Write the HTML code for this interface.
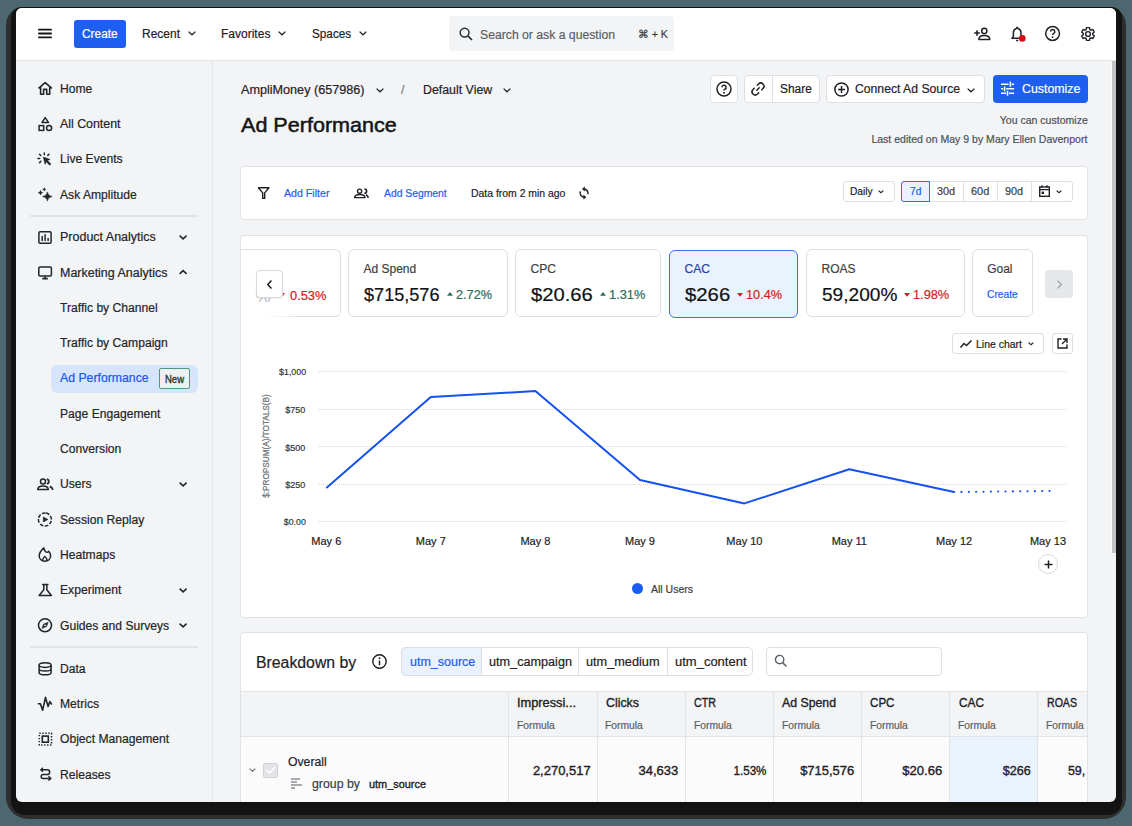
<!DOCTYPE html>
<html><head><meta charset="utf-8"><style>*{box-sizing:border-box;margin:0;padding:0}
html,body{width:1132px;height:826px;overflow:hidden}
body{background:#4c6770;font-family:"Liberation Sans",sans-serif;color:#1f2125;position:relative}
.abs{position:absolute}
.t{position:absolute;white-space:nowrap;line-height:1;-webkit-text-stroke:0.2px currentColor}
svg{position:absolute;overflow:visible}
#sh1{position:absolute;left:6px;top:6.5px;width:1120px;height:812px;background:#2e2e2e;border-radius:18px 18px 22px 22px}
#sh2{position:absolute;left:10.5px;top:7px;width:1111px;height:807.5px;background:#131313;border-radius:10px 10px 14px 14px}
#win{position:absolute;left:16px;top:8px;width:1100px;height:794px;background:#f3f4f6;border-radius:6px;overflow:hidden}
#c{position:absolute;left:-16px;top:-8px;width:1132px;height:826px}
</style></head><body>
<div id="sh1"></div><div id="sh2"></div>
<div id="win"><div id="c">
<div class="abs" style="left:16px;top:8px;width:1100px;height:52px;background:#fff"></div>
<div class="abs" style="left:16px;top:60px;width:1100px;height:1px;background:#e3e5e9"></div>
<div class="abs" style="left:212px;top:61px;width:1px;height:741px;background:#e3e5e9"></div>
<svg style="left:38px;top:28px" width="14" height="11" viewBox="0 0 14 11"><path d="M0.9 1.7H13.1M0.9 5.5H13.1M0.9 9.3H13.1" stroke="#141518" stroke-width="1.8" stroke-linecap="round"/></svg>
<div class="abs" style="left:74px;top:20px;width:52px;height:28px;background:#1e5ff2;border-radius:3px"></div>
<div class="t" id="t0" style="left:82.30px;top:27.82px;font-size:12.5px;color:#fff;font-weight:400;transform:scaleX(0.9512);transform-origin:0 0;">Create</div>
<div class="t" id="t1" style="left:141.90px;top:28.02px;font-size:12.5px;color:#1f2125;font-weight:400;transform:scaleX(0.9594);transform-origin:0 0;">Recent</div>
<svg style="left:187.5px;top:31px" width="8" height="4.4" viewBox="0 0 8 4.4"><path d="M0.6 0.6L4.0 3.8000000000000003L7.4 0.6" stroke="#1f2125" stroke-width="1.3" fill="none"/></svg>
<div class="t" id="t2" style="left:221.40px;top:28.02px;font-size:12.5px;color:#1f2125;font-weight:400;transform:scaleX(0.9610);transform-origin:0 0;">Favorites</div>
<svg style="left:278px;top:31px" width="8" height="4.4" viewBox="0 0 8 4.4"><path d="M0.6 0.6L4.0 3.8000000000000003L7.4 0.6" stroke="#1f2125" stroke-width="1.3" fill="none"/></svg>
<div class="t" id="t3" style="left:312.00px;top:28.02px;font-size:12.5px;color:#1f2125;font-weight:400;transform:scaleX(0.9400);transform-origin:0 0;">Spaces</div>
<svg style="left:358.6px;top:31px" width="8" height="4.4" viewBox="0 0 8 4.4"><path d="M0.6 0.6L4.0 3.8000000000000003L7.4 0.6" stroke="#1f2125" stroke-width="1.3" fill="none"/></svg>
<div class="abs" style="left:449px;top:16px;width:225px;height:35px;background:#f3f4f6;border-radius:4px"></div>
<svg style="left:459px;top:27px" width="14" height="14" viewBox="0 0 14 14"><circle cx="5.6" cy="5.6" r="4.4" stroke="#2a2c30" stroke-width="1.5" fill="none"/><path d="M8.8 8.8L13 13" stroke="#2a2c30" stroke-width="1.7"/></svg>
<div class="t" id="t4" style="left:480.00px;top:28.52px;font-size:12.5px;color:#5b5f66;font-weight:400;transform:scaleX(0.9763);transform-origin:0 0;">Search or ask a question</div>
<div class="t" id="t5" style="left:638.00px;top:28.79px;font-size:11px;color:#3a3d42;font-weight:400;transform:scaleX(0.9717);transform-origin:0 0;">⌘ + K</div>
<svg style="left:1080px;top:25.5px" width="16" height="16" viewBox="0 0 24 24"><path d="M19.14 12.94c.04-.3.06-.61.06-.94 0-.32-.02-.64-.07-.94l2.03-1.58a.49.49 0 0 0 .12-.61l-1.92-3.32a.488.488 0 0 0-.59-.22l-2.39.96c-.5-.38-1.030-.7-1.62-.94l-.36-2.54a.484.484 0 0 0-.48-.41h-3.84c-.24 0-.43.17-.47.41l-.36 2.54c-.59.24-1.13.57-1.62.94l-2.39-.96c-.22-.08-.47 0-.59.22L2.74 8.87c-.12.21-.08.47.12.61l2.03 1.58c-.05.3-.09.63-.09.94s.02.64.07.94l-2.030 1.58a.49.49 0 0 0-.12.61l1.92 3.32c.12.22.37.29.59.22l2.39-.96c.5.38 1.03.7 1.62.94l.36 2.54c.05.24.24.41.48.41h3.84c.24 0 .44-.17.47-.41l.36-2.54c.59-.24 1.13-.56 1.62-.94l2.39.96c.22.08.47 0 .59-.22l1.92-3.32c.12-.22.07-.47-.12-.61l-2.01-1.58zM12 15.6c-1.98 0-3.6-1.62-3.6-3.6s1.62-3.6 3.6-3.6 3.6 1.62 3.6 3.6-1.62 3.6-3.6 3.6z" fill="none" stroke="#1f2125" stroke-width="2.1"/></svg>
<div class="abs" style="left:30px;top:215px;width:168px;height:2px;background:#e1e3e7"></div>
<div class="abs" style="left:30px;top:646px;width:168px;height:2px;background:#e1e3e7"></div>
<div class="abs" style="left:51px;top:365px;width:147px;height:28px;background:#d6e4fc;border-radius:6px"></div>
<div class="t" id="t6" style="left:59.50px;top:82.72px;font-size:12.5px;color:#222428;font-weight:400;transform:scaleX(0.9687);transform-origin:0 0;">Home</div>
<div class="t" id="t7" style="left:59.50px;top:118.02px;font-size:12.5px;color:#222428;font-weight:400;transform:scaleX(0.9893);transform-origin:0 0;">All Content</div>
<div class="t" id="t8" style="left:59.50px;top:153.32px;font-size:12.5px;color:#222428;font-weight:400;transform:scaleX(0.9700);transform-origin:0 0;">Live Events</div>
<div class="t" id="t9" style="left:59.50px;top:188.62px;font-size:12.5px;color:#222428;font-weight:400;transform:scaleX(0.9700);transform-origin:0 0;">Ask Amplitude</div>
<div class="t" id="t10" style="left:59.50px;top:231.22px;font-size:12.5px;color:#222428;font-weight:400;transform:scaleX(0.9991);transform-origin:0 0;">Product Analytics</div>
<svg style="left:179px;top:234.6px" width="8.2" height="4.51" viewBox="0 0 8.2 4.51"><path d="M0.6 0.6L4.1 3.9099999999999997L7.6 0.6" stroke="#222428" stroke-width="1.5" fill="none"/></svg>
<div class="t" id="t11" style="left:59.50px;top:266.52px;font-size:12.5px;color:#222428;font-weight:400;transform:scaleX(0.9973);transform-origin:0 0;">Marketing Analytics</div>
<svg style="left:179px;top:269.9px" width="8.2" height="4.51" viewBox="0 0 8.2 4.51"><path d="M0.6 3.9099999999999997L4.1 0.6L7.6 3.9099999999999997" stroke="#222428" stroke-width="1.5" fill="none"/></svg>
<div class="t" id="t12" style="left:59.50px;top:301.82px;font-size:12.5px;color:#222428;font-weight:400;transform:scaleX(0.9700);transform-origin:0 0;">Traffic by Channel</div>
<div class="t" id="t13" style="left:59.50px;top:337.12px;font-size:12.5px;color:#222428;font-weight:400;transform:scaleX(0.9700);transform-origin:0 0;">Traffic by Campaign</div>
<div class="t" id="t14" style="left:59.50px;top:372.42px;font-size:12.5px;color:#1a55ec;font-weight:400;transform:scaleX(0.9809);transform-origin:0 0;">Ad Performance</div>
<div class="t" id="t15" style="left:59.50px;top:407.72px;font-size:12.5px;color:#222428;font-weight:400;transform:scaleX(0.9700);transform-origin:0 0;">Page Engagement</div>
<div class="t" id="t16" style="left:59.50px;top:443.02px;font-size:12.5px;color:#222428;font-weight:400;transform:scaleX(0.9700);transform-origin:0 0;">Conversion</div>
<div class="t" id="t17" style="left:59.50px;top:478.32px;font-size:12.5px;color:#222428;font-weight:400;transform:scaleX(0.9700);transform-origin:0 0;">Users</div>
<svg style="left:179px;top:481.7px" width="8.2" height="4.51" viewBox="0 0 8.2 4.51"><path d="M0.6 0.6L4.1 3.9099999999999997L7.6 0.6" stroke="#222428" stroke-width="1.5" fill="none"/></svg>
<div class="t" id="t18" style="left:59.50px;top:513.62px;font-size:12.5px;color:#222428;font-weight:400;transform:scaleX(0.9700);transform-origin:0 0;">Session Replay</div>
<div class="t" id="t19" style="left:59.50px;top:548.92px;font-size:12.5px;color:#222428;font-weight:400;transform:scaleX(0.9700);transform-origin:0 0;">Heatmaps</div>
<div class="t" id="t20" style="left:59.50px;top:584.22px;font-size:12.5px;color:#222428;font-weight:400;transform:scaleX(0.9700);transform-origin:0 0;">Experiment</div>
<svg style="left:179px;top:587.6px" width="8.2" height="4.51" viewBox="0 0 8.2 4.51"><path d="M0.6 0.6L4.1 3.9099999999999997L7.6 0.6" stroke="#222428" stroke-width="1.5" fill="none"/></svg>
<div class="t" id="t21" style="left:59.50px;top:619.52px;font-size:12.5px;color:#222428;font-weight:400;transform:scaleX(0.9700);transform-origin:0 0;">Guides and Surveys</div>
<svg style="left:179px;top:622.9px" width="8.2" height="4.51" viewBox="0 0 8.2 4.51"><path d="M0.6 0.6L4.1 3.9099999999999997L7.6 0.6" stroke="#222428" stroke-width="1.5" fill="none"/></svg>
<div class="t" id="t22" style="left:59.50px;top:662.62px;font-size:12.5px;color:#222428;font-weight:400;transform:scaleX(0.9700);transform-origin:0 0;">Data</div>
<div class="t" id="t23" style="left:59.50px;top:697.92px;font-size:12.5px;color:#222428;font-weight:400;transform:scaleX(0.9700);transform-origin:0 0;">Metrics</div>
<div class="t" id="t24" style="left:59.50px;top:733.22px;font-size:12.5px;color:#222428;font-weight:400;transform:scaleX(0.9700);transform-origin:0 0;">Object Management</div>
<div class="t" id="t25" style="left:59.50px;top:768.52px;font-size:12.5px;color:#222428;font-weight:400;transform:scaleX(0.9700);transform-origin:0 0;">Releases</div>
<div class="abs" style="left:159px;top:368px;width:31px;height:21px;background:#eef0f1;border:1px solid #4b9a83;border-radius:2px"></div>
<div class="t" id="t26" style="left:165.00px;top:373.79px;font-size:11px;color:#24352f;font-weight:400;-webkit-text-stroke:0.35px #24352f;transform:scaleX(0.8630);transform-origin:0 0;">New</div>
<div class="t" id="t27" style="left:241.00px;top:84.42px;font-size:12.5px;color:#1f2125;font-weight:400;transform:scaleX(1.0098);transform-origin:0 0;">AmpliMoney (657986)</div>
<svg style="left:376px;top:88.3px" width="8" height="4.4" viewBox="0 0 8 4.4"><path d="M0.6 0.6L4.0 3.8000000000000003L7.4 0.6" stroke="#1f2125" stroke-width="1.3" fill="none"/></svg>
<div class="t" id="t28" style="left:401.00px;top:84.42px;font-size:12.5px;color:#7a7d82;font-weight:400;">/</div>
<div class="t" id="t29" style="left:422.70px;top:84.42px;font-size:12.5px;color:#1f2125;font-weight:400;transform:scaleX(0.9892);transform-origin:0 0;">Default View</div>
<svg style="left:503.3px;top:88.3px" width="8" height="4.4" viewBox="0 0 8 4.4"><path d="M0.6 0.6L4.0 3.8000000000000003L7.4 0.6" stroke="#1f2125" stroke-width="1.3" fill="none"/></svg>
<div class="t" id="t30" style="left:240.60px;top:114.78px;font-size:20.7px;color:#131417;font-weight:400;transform:scaleX(1.0422);transform-origin:0 0;-webkit-text-stroke:0.5px #131417;">Ad Performance</div>
<div class="abs" style="left:710px;top:75px;width:28px;height:28px;background:#fff;border:1px solid #dcdfe3;border-radius:4px;"></div>
<svg style="left:716px;top:81px" width="16" height="16" viewBox="0 0 16 16"><circle cx="8" cy="8" r="7" stroke="#1f2125" stroke-width="1.5" fill="none"/><path d="M5.9 6.3A2.1 2.1 0 1 1 8.9 8.2C8.3 8.5 8 8.9 8 9.6" stroke="#1f2125" stroke-width="1.5" fill="none"/><circle cx="8" cy="11.7" r="0.95" fill="#1f2125"/></svg>
<div class="abs" style="left:744px;top:75px;width:76px;height:28px;background:#fff;border:1px solid #dcdfe3;border-radius:4px;"></div>
<div class="abs" style="left:772px;top:75px;width:1px;height:28px;background:#dcdfe3"></div>
<svg style="left:751px;top:82px" width="14" height="14" viewBox="0 0 14 14"><path d="M5.8 8.2L8.2 5.8M6.3 3.2L7.5 2A2.8 2.8 0 0 1 12 6.5L10.8 7.7M7.7 10.8L6.5 12A2.8 2.8 0 0 1 2 7.5L3.2 6.3" stroke="#1f2125" stroke-width="1.5" fill="none" stroke-linecap="round"/></svg>
<div class="t" id="t31" style="left:779.50px;top:83.32px;font-size:12.5px;color:#1f2125;font-weight:400;transform:scaleX(0.9533);transform-origin:0 0;">Share</div>
<div class="abs" style="left:826px;top:75px;width:159px;height:28px;background:#fff;border:1px solid #dcdfe3;border-radius:4px;"></div>
<svg style="left:834px;top:82px" width="15" height="15" viewBox="0 0 15 15"><circle cx="7.5" cy="7.5" r="6.6" stroke="#1f2125" stroke-width="1.5" fill="none"/><path d="M7.5 4V11M4 7.5H11" stroke="#1f2125" stroke-width="1.5"/></svg>
<div class="t" id="t32" style="left:854.80px;top:83.32px;font-size:12.5px;color:#1f2125;font-weight:400;transform:scaleX(0.9748);transform-origin:0 0;">Connect Ad Source</div>
<svg style="left:967px;top:87.5px" width="8" height="4.4" viewBox="0 0 8 4.4"><path d="M0.6 0.6L4.0 3.8000000000000003L7.4 0.6" stroke="#1f2125" stroke-width="1.3" fill="none"/></svg>
<div class="abs" style="left:993px;top:75px;width:95px;height:28px;background:#1e5ff2;border-radius:4px"></div>
<div class="t" id="t33" style="left:1021.60px;top:83.32px;font-size:12.5px;color:#fff;font-weight:400;transform:scaleX(0.9874);transform-origin:0 0;">Customize</div>
<div class="t" id="t34" style="right:44.40px;top:115.01px;font-size:10.5px;color:#4d5157;font-weight:400;transform:scaleX(1.0028);transform-origin:100% 0;">You can customize</div>
<div class="t" id="t35" style="right:44.40px;top:134.41px;font-size:10.5px;color:#4d5157;font-weight:400;transform:scaleX(1.0029);transform-origin:100% 0;">Last edited on May 9 by Mary Ellen Davenport</div>
<div class="abs" style="left:240px;top:166px;width:848px;height:54px;background:#fff;border:1px solid #e0e2e6;border-radius:4px;"></div>
<div class="t" id="t36" style="left:284.30px;top:187.99px;font-size:11px;color:#1d5cf0;font-weight:400;transform:scaleX(0.9665);transform-origin:0 0;">Add Filter</div>
<div class="t" id="t37" style="left:383.60px;top:187.99px;font-size:11px;color:#1d5cf0;font-weight:400;transform:scaleX(0.9406);transform-origin:0 0;">Add Segment</div>
<div class="t" id="t38" style="left:471.20px;top:187.99px;font-size:11px;color:#1f2125;font-weight:400;transform:scaleX(0.9473);transform-origin:0 0;">Data from 2 min ago</div>
<div class="abs" style="left:843px;top:181px;width:52px;height:21px;background:#fff;border:1px solid #dcdfe3;border-radius:3px;"></div>
<div class="t" id="t39" style="left:850.30px;top:186.37px;font-size:11.5px;color:#1f2125;font-weight:400;transform:scaleX(0.8880);transform-origin:0 0;">Daily</div>
<svg style="left:878.3px;top:189.5px" width="6" height="3.3000000000000003" viewBox="0 0 6 3.3000000000000003"><path d="M0.6 0.6L3.0 2.7L5.4 0.6" stroke="#1f2125" stroke-width="1.2" fill="none"/></svg>
<div class="abs" style="left:901px;top:181px;width:172px;height:21px;background:#fff;border:1px solid #dcdfe3;border-radius:3px;"></div>
<div class="abs" style="left:963px;top:181px;width:1px;height:21px;background:#dcdfe3"></div>
<div class="abs" style="left:997px;top:181px;width:1px;height:21px;background:#dcdfe3"></div>
<div class="abs" style="left:1031px;top:181px;width:1px;height:21px;background:#dcdfe3"></div>
<div class="abs" style="left:901px;top:181px;width:29px;height:21px;background:#eaf2fe;border:1px solid #2e6cf0;border-radius:3px 0 0 3px"></div>
<div class="t" id="t40" style="left:909.70px;top:186.37px;font-size:11.5px;color:#1d5cf0;font-weight:400;transform:scaleX(0.8908);transform-origin:0 0;">7d</div>
<div class="t" id="t41" style="left:937.20px;top:186.37px;font-size:11.5px;color:#3a3d42;font-weight:400;transform:scaleX(0.9381);transform-origin:0 0;">30d</div>
<div class="t" id="t42" style="left:970.90px;top:186.37px;font-size:11.5px;color:#3a3d42;font-weight:400;transform:scaleX(0.9537);transform-origin:0 0;">60d</div>
<div class="t" id="t43" style="left:1004.80px;top:186.37px;font-size:11.5px;color:#3a3d42;font-weight:400;transform:scaleX(0.9433);transform-origin:0 0;">90d</div>
<svg style="left:1039px;top:185px" width="11" height="12" viewBox="0 0 11 12"><rect x="0.7" y="2" width="9.6" height="9.3" stroke="#1f2125" stroke-width="1.4" fill="none"/><path d="M0.7 4.6H10.3M3 0.3V2.5M8 0.3V2.5" stroke="#1f2125" stroke-width="1.4"/><rect x="2.6" y="6.6" width="2.4" height="2.4" fill="#1f2125"/></svg>
<svg style="left:1056px;top:189.5px" width="6" height="3.3000000000000003" viewBox="0 0 6 3.3000000000000003"><path d="M0.6 0.6L3.0 2.7L5.4 0.6" stroke="#1f2125" stroke-width="1.2" fill="none"/></svg>
<div class="abs" style="left:240px;top:235px;width:848px;height:383px;background:#fff;border:1px solid #e0e2e6;border-radius:4px;"></div>
<div class="abs" style="left:241px;top:249px;width:100px;height:68px;background:#fff;border:1px solid #dcdfe3;border-radius:6px;border-left:none;border-radius:0 6px 6px 0"></div>
<div class="abs" style="left:241px;top:250px;width:59px;height:68px;background:linear-gradient(90deg,#fff 0%,#fff 35%,rgba(255,255,255,0.6) 70%,rgba(255,255,255,0) 100%)"></div>
<div class="t" id="t44" style="left:289.70px;top:290.32px;font-size:12.5px;color:#d91b24;font-weight:400;transform:scaleX(1.0267);transform-origin:0 0;">0.53%</div>
<svg style="left:280px;top:292.5px" width="5" height="4" viewBox="0 0 5 4"><path d="M0 0H5L2.5 3.2Z" fill="#d91b24"/></svg>
<div class="t" id="t45" style="left:255.50px;top:288.21px;font-size:17px;color:#c3c6ca;font-weight:400;">%</div>
<div class="abs" style="left:255.5px;top:270px;width:27.5px;height:28px;background:#fff;border:1px solid #d6d9dd;border-radius:4px;box-shadow:0 1px 2px rgba(0,0,0,.06)"></div>
<svg style="left:266.5px;top:280px" width="5" height="9" viewBox="0 0 5 9"><path d="M4.4 0.6L0.8 4.5L4.4 8.4" stroke="#1a1b1e" stroke-width="1.5" fill="none"/></svg>
<div class="abs" style="left:348px;top:249px;width:160px;height:68px;background:#fff;border:1px solid #dcdfe3;border-radius:6px;"></div>
<div class="t" id="t46" style="left:363.50px;top:263.24px;font-size:12px;color:#3c3f44;font-weight:400;">Ad Spend</div>
<div class="t" id="t47" style="left:363.50px;top:285.12px;font-size:19px;color:#111214;font-weight:400;transform:scaleX(0.9527);transform-origin:0 0;">$715,576</div>
<svg style="left:446.5px;top:292.3px" width="6" height="3.8" viewBox="0 0 6 3.8"><path d="M0 3.8H6L3 0Z" fill="#2c6b5d"/></svg>
<div class="t" id="t48" style="left:455.50px;top:288.82px;font-size:12.5px;color:#2c6b5d;font-weight:400;transform:scaleX(1.0154);transform-origin:0 0;">2.72%</div>
<div class="abs" style="left:515px;top:249px;width:146px;height:68px;background:#fff;border:1px solid #dcdfe3;border-radius:6px;"></div>
<div class="t" id="t49" style="left:530.50px;top:263.24px;font-size:12px;color:#3c3f44;font-weight:400;">CPC</div>
<div class="t" id="t50" style="left:530.50px;top:285.12px;font-size:19px;color:#111214;font-weight:400;transform:scaleX(1.0632);transform-origin:0 0;">$20.66</div>
<svg style="left:599.8px;top:292.3px" width="6" height="3.8" viewBox="0 0 6 3.8"><path d="M0 3.8H6L3 0Z" fill="#2c6b5d"/></svg>
<div class="t" id="t51" style="left:608.80px;top:288.82px;font-size:12.5px;color:#2c6b5d;font-weight:400;transform:scaleX(1.0267);transform-origin:0 0;">1.31%</div>
<div class="abs" style="left:669px;top:250px;width:129px;height:68px;background:#eaf2fe;border:1px solid #3a74e6;border-radius:6px"></div>
<div class="t" id="t52" style="left:684.50px;top:263.24px;font-size:12px;color:#1e3ea8;font-weight:400;">CAC</div>
<div class="t" id="t53" style="left:684.50px;top:285.12px;font-size:19px;color:#111214;font-weight:400;transform:scaleX(1.0690);transform-origin:0 0;">$266</div>
<svg style="left:737.2px;top:292.8px" width="6" height="3.8" viewBox="0 0 6 3.8"><path d="M0 0H6L3 3.8Z" fill="#d91b24"/></svg>
<div class="t" id="t54" style="left:746.20px;top:288.82px;font-size:12.5px;color:#d91b24;font-weight:400;transform:scaleX(1.0182);transform-origin:0 0;">10.4%</div>
<div class="abs" style="left:806px;top:249px;width:159px;height:68px;background:#fff;border:1px solid #dcdfe3;border-radius:6px;"></div>
<div class="t" id="t55" style="left:821.50px;top:263.24px;font-size:12px;color:#3c3f44;font-weight:400;">ROAS</div>
<div class="t" id="t56" style="left:821.50px;top:285.12px;font-size:19px;color:#111214;font-weight:400;transform:scaleX(1.0051);transform-origin:0 0;">59,200%</div>
<svg style="left:904.4px;top:292.8px" width="6" height="3.8" viewBox="0 0 6 3.8"><path d="M0 0H6L3 3.8Z" fill="#d91b24"/></svg>
<div class="t" id="t57" style="left:913.40px;top:288.82px;font-size:12.5px;color:#d91b24;font-weight:400;transform:scaleX(1.0211);transform-origin:0 0;">1.98%</div>
<div class="abs" style="left:972px;top:249px;width:61px;height:68px;background:#fff;border:1px solid #dcdfe3;border-radius:6px;"></div>
<div class="t" id="t58" style="left:987.20px;top:263.24px;font-size:12px;color:#3c3f44;font-weight:400;">Goal</div>
<div class="t" id="t59" style="left:987.20px;top:288.79px;font-size:11px;color:#1d5cf0;font-weight:400;transform:scaleX(0.9325);transform-origin:0 0;">Create</div>
<div class="abs" style="left:1045px;top:270px;width:28px;height:28px;background:#e6e7ea;border-radius:4px"></div>
<svg style="left:1057px;top:280px" width="5" height="9" viewBox="0 0 5 9"><path d="M0.6 0.6L4.4 4.5L0.6 8.4" stroke="#9a9ea4" stroke-width="1.3" fill="none"/></svg>
<div class="abs" style="left:952px;top:333px;width:92px;height:21px;background:#fff;border:1px solid #dcdfe3;border-radius:3px;"></div>
<svg style="left:960px;top:340px" width="12" height="8" viewBox="0 0 12 8"><path d="M0.5 7.5L4 3.5L6.5 5.5L11.5 0.5" stroke="#1f2125" stroke-width="1.5" fill="none"/></svg>
<div class="t" id="t60" style="left:976.10px;top:338.59px;font-size:11px;color:#1f2125;font-weight:400;transform:scaleX(0.9501);transform-origin:0 0;">Line chart</div>
<svg style="left:1028px;top:341.5px" width="6" height="3.3000000000000003" viewBox="0 0 6 3.3000000000000003"><path d="M0.6 0.6L3.0 2.7L5.4 0.6" stroke="#1f2125" stroke-width="1.2" fill="none"/></svg>
<div class="abs" style="left:1052px;top:333px;width:21px;height:21px;background:#fff;border:1px solid #dcdfe3;border-radius:3px;"></div>
<svg style="left:1057px;top:338px" width="11" height="11" viewBox="0 0 11 11"><path d="M4.5 1H1V10H10V6.5M6 1H10V5M10 1L5 6" stroke="#1f2125" stroke-width="1.4" fill="none"/></svg>
<div class="abs" style="left:319px;top:370.5px;width:747px;height:1.0px;background:repeating-linear-gradient(90deg,#d5d7da 0 1px,transparent 1px 2px)"></div>
<div class="t" id="t61" style="right:826.40px;top:367.06px;font-size:9.5px;color:#33363b;font-weight:400;transform:scaleX(0.9290);transform-origin:100% 0;">$1,000</div>
<div class="abs" style="left:319px;top:408.5px;width:747px;height:1.0px;background:repeating-linear-gradient(90deg,#d5d7da 0 1px,transparent 1px 2px)"></div>
<div class="t" id="t62" style="right:826.40px;top:405.06px;font-size:9.5px;color:#33363b;font-weight:400;transform:scaleX(0.9460);transform-origin:100% 0;">$750</div>
<div class="abs" style="left:319px;top:446.0px;width:747px;height:1.0px;background:repeating-linear-gradient(90deg,#d5d7da 0 1px,transparent 1px 2px)"></div>
<div class="t" id="t63" style="right:826.40px;top:442.56px;font-size:9.5px;color:#33363b;font-weight:400;transform:scaleX(0.9460);transform-origin:100% 0;">$500</div>
<div class="abs" style="left:319px;top:483.5px;width:747px;height:1.0px;background:repeating-linear-gradient(90deg,#d5d7da 0 1px,transparent 1px 2px)"></div>
<div class="t" id="t64" style="right:826.40px;top:480.06px;font-size:9.5px;color:#33363b;font-weight:400;transform:scaleX(0.9460);transform-origin:100% 0;">$250</div>
<div class="abs" style="left:319px;top:520.5px;width:747px;height:1.0px;background:repeating-linear-gradient(90deg,#d5d7da 0 1px,transparent 1px 2px)"></div>
<div class="t" id="t65" style="right:826.40px;top:517.06px;font-size:9.5px;color:#33363b;font-weight:400;transform:scaleX(0.9251);transform-origin:100% 0;">$0.00</div>
<div class="t" style="left:267.3px;top:445.8px;font-size:8.2px;color:#6b6f75;transform:translate(-50%,-50%) rotate(-90deg);transform-origin:center">$:PROPSUM(A)/TOTALS(B)</div>
<svg style="left:0px;top:0px" width="1132" height="826" viewBox="0 0 1132 826"><path d="M326.3 487.9 L430.8 397 L535.4 391.1 L640 480.1 L744.4 503.4 L849.3 469.3 L954.1 492" stroke="#1352f0" stroke-width="2" fill="none" stroke-linejoin="round"/><path d="M954.1 492 L1056 490.9" stroke="#1352f0" stroke-width="2.1" fill="none" stroke-dasharray="0.1 7.24" stroke-linecap="round"/></svg>
<div class="t" id="t66" style="left:326.30px;top:536.19px;font-size:11px;color:#1f2125;font-weight:400;transform:translateX(-50%);">May 6</div>
<div class="t" id="t67" style="left:430.80px;top:536.19px;font-size:11px;color:#1f2125;font-weight:400;transform:translateX(-50%);">May 7</div>
<div class="t" id="t68" style="left:535.40px;top:536.19px;font-size:11px;color:#1f2125;font-weight:400;transform:translateX(-50%);">May 8</div>
<div class="t" id="t69" style="left:640.00px;top:536.19px;font-size:11px;color:#1f2125;font-weight:400;transform:translateX(-50%);">May 9</div>
<div class="t" id="t70" style="left:744.40px;top:536.19px;font-size:11px;color:#1f2125;font-weight:400;transform:translateX(-50%);">May 10</div>
<div class="t" id="t71" style="left:849.30px;top:536.19px;font-size:11px;color:#1f2125;font-weight:400;transform:translateX(-50%);">May 11</div>
<div class="t" id="t72" style="left:954.10px;top:536.19px;font-size:11px;color:#1f2125;font-weight:400;transform:translateX(-50%);">May 12</div>
<div class="t" id="t73" style="left:1048.00px;top:536.19px;font-size:11px;color:#1f2125;font-weight:400;transform:translateX(-50%);">May 13</div>
<div class="abs" style="left:1038px;top:554px;width:20px;height:20px;border:1px solid #d6d9dd;border-radius:50%;background:#fff"></div>
<svg style="left:1043.5px;top:559.5px" width="9" height="9" viewBox="0 0 9 9"><path d="M4.5 0.5V8.5M0.5 4.5H8.5" stroke="#1f2125" stroke-width="1.5"/></svg>
<div class="abs" style="left:632px;top:583px;width:11px;height:11px;border-radius:50%;background:#1d5cf0"></div>
<div class="t" id="t74" style="left:651.20px;top:583.59px;font-size:11px;color:#3a3d42;font-weight:400;transform:scaleX(0.9542);transform-origin:0 0;">All Users</div>
<div class="abs" style="left:240px;top:632px;width:848px;height:198px;background:#fff;border:1px solid #e0e2e6;border-radius:4px;"></div>
<div class="t" id="t75" style="left:255.60px;top:654.56px;font-size:16px;color:#1f2125;font-weight:400;transform:scaleX(0.9883);transform-origin:0 0;">Breakdown by</div>
<svg style="left:372px;top:654px" width="15" height="15" viewBox="0 0 15 15"><circle cx="7.5" cy="7.5" r="6.7" stroke="#1f2125" stroke-width="1.4" fill="none"/><path d="M7.5 6.5V11.3" stroke="#1f2125" stroke-width="1.5"/><circle cx="7.5" cy="4.3" r="0.95" fill="#1f2125"/></svg>
<div class="abs" style="left:401px;top:647px;width:352px;height:29px;background:#fff;border:1px solid #dcdfe3;border-radius:5px"></div>
<div class="abs" style="left:401px;top:647px;width:81px;height:29px;background:#eaf2fe;border:1px solid #dcdfe3;border-radius:5px 0 0 5px"></div>
<div class="abs" style="left:578px;top:647px;width:1px;height:29px;background:#dcdfe3"></div>
<div class="abs" style="left:666.5px;top:647px;width:1.0px;height:29px;background:#dcdfe3"></div>
<div class="t" id="t76" style="left:409.50px;top:656.42px;font-size:12.5px;color:#1d5cf0;font-weight:400;transform:scaleX(0.9998);transform-origin:0 0;">utm_source</div>
<div class="t" id="t77" style="left:489.00px;top:656.42px;font-size:12.5px;color:#1f2125;font-weight:400;transform:scaleX(1.0122);transform-origin:0 0;">utm_campaign</div>
<div class="t" id="t78" style="left:585.50px;top:656.42px;font-size:12.5px;color:#1f2125;font-weight:400;transform:scaleX(1.0173);transform-origin:0 0;">utm_medium</div>
<div class="t" id="t79" style="left:674.50px;top:656.42px;font-size:12.5px;color:#1f2125;font-weight:400;transform:scaleX(1.0393);transform-origin:0 0;">utm_content</div>
<div class="abs" style="left:766px;top:647px;width:176px;height:29px;background:#fff;border:1px solid #dcdfe3;border-radius:4px"></div>
<svg style="left:774px;top:654px" width="14" height="14" viewBox="0 0 14 14"><circle cx="5.6" cy="5.6" r="4.2" stroke="#5b5f66" stroke-width="1.4" fill="none"/><path d="M8.6 8.6L12.5 12.5" stroke="#5b5f66" stroke-width="1.5"/></svg>
<div class="abs" style="left:241px;top:691px;width:846px;height:46px;background:#f3f4f6;border-top:1px solid #e1e3e7;border-bottom:1px solid #e1e3e7"></div>
<div class="abs" style="left:241px;top:737px;width:846px;height:93px;background:#fbfbfc"></div>
<div class="abs" style="left:949px;top:737px;width:88px;height:93px;background:#e9f2fd"></div>
<div class="abs" style="left:508px;top:691px;width:1px;height:139px;background:#e1e3e7"></div>
<div class="abs" style="left:596.5px;top:691px;width:1.0px;height:139px;background:#e1e3e7"></div>
<div class="abs" style="left:684.5px;top:691px;width:1.0px;height:139px;background:#e1e3e7"></div>
<div class="abs" style="left:772.5px;top:691px;width:1.0px;height:139px;background:#e1e3e7"></div>
<div class="abs" style="left:860.5px;top:691px;width:1.0px;height:139px;background:#e1e3e7"></div>
<div class="abs" style="left:949px;top:691px;width:1px;height:139px;background:#e1e3e7"></div>
<div class="abs" style="left:1037px;top:691px;width:1px;height:139px;background:#e1e3e7"></div>
<div class="t" id="t80" style="left:517.00px;top:697.32px;font-size:12.5px;color:#1f2125;font-weight:400;-webkit-text-stroke:0.35px #1f2125;transform:scaleX(1.0233);transform-origin:0 0;">Impressi...</div>
<div class="t" id="t81" style="left:516.50px;top:719.71px;font-size:10.5px;color:#5b5f66;font-weight:400;transform:scaleX(0.9814);transform-origin:0 0;">Formula</div>
<div class="t" id="t82" style="left:605.50px;top:697.32px;font-size:12.5px;color:#1f2125;font-weight:400;-webkit-text-stroke:0.35px #1f2125;transform:scaleX(0.9897);transform-origin:0 0;">Clicks</div>
<div class="t" id="t83" style="left:605.00px;top:719.71px;font-size:10.5px;color:#5b5f66;font-weight:400;transform:scaleX(0.9814);transform-origin:0 0;">Formula</div>
<div class="t" id="t84" style="left:694.00px;top:697.32px;font-size:12.5px;color:#1f2125;font-weight:400;-webkit-text-stroke:0.35px #1f2125;transform:scaleX(0.8559);transform-origin:0 0;">CTR</div>
<div class="t" id="t85" style="left:693.50px;top:719.71px;font-size:10.5px;color:#5b5f66;font-weight:400;transform:scaleX(0.9814);transform-origin:0 0;">Formula</div>
<div class="t" id="t86" style="left:782.20px;top:697.32px;font-size:12.5px;color:#1f2125;font-weight:400;-webkit-text-stroke:0.35px #1f2125;transform:scaleX(0.9832);transform-origin:0 0;">Ad Spend</div>
<div class="t" id="t87" style="left:781.70px;top:719.71px;font-size:10.5px;color:#5b5f66;font-weight:400;transform:scaleX(0.9814);transform-origin:0 0;">Formula</div>
<div class="t" id="t88" style="left:870.40px;top:697.32px;font-size:12.5px;color:#1f2125;font-weight:400;-webkit-text-stroke:0.35px #1f2125;transform:scaleX(0.9278);transform-origin:0 0;">CPC</div>
<div class="t" id="t89" style="left:869.90px;top:719.71px;font-size:10.5px;color:#5b5f66;font-weight:400;transform:scaleX(0.9814);transform-origin:0 0;">Formula</div>
<div class="t" id="t90" style="left:958.70px;top:697.32px;font-size:12.5px;color:#1f2125;font-weight:400;-webkit-text-stroke:0.35px #1f2125;transform:scaleX(0.9467);transform-origin:0 0;">CAC</div>
<div class="t" id="t91" style="left:958.20px;top:719.71px;font-size:10.5px;color:#5b5f66;font-weight:400;transform:scaleX(0.9814);transform-origin:0 0;">Formula</div>
<div class="t" id="t92" style="left:1046.50px;top:697.32px;font-size:12.5px;color:#1f2125;font-weight:400;-webkit-text-stroke:0.35px #1f2125;transform:scaleX(0.8466);transform-origin:0 0;">ROAS</div>
<div class="t" id="t93" style="left:1046.00px;top:719.71px;font-size:10.5px;color:#5b5f66;font-weight:400;transform:scaleX(0.9814);transform-origin:0 0;">Formula</div>
<svg style="left:249px;top:767.5px" width="7" height="3.8500000000000005" viewBox="0 0 7 3.8500000000000005"><path d="M0.6 0.6L3.5 3.2500000000000004L6.4 0.6" stroke="#6b6f75" stroke-width="1.1" fill="none"/></svg>
<div class="abs" style="left:263px;top:763px;width:15px;height:15px;background:#e3e4e7;border:1px solid #cfd2d6;border-radius:2px"></div>
<svg style="left:265.5px;top:766px" width="10" height="8" viewBox="0 0 10 8"><path d="M0.8 4L3.8 7L9.2 1" stroke="#fff" stroke-width="1.5" fill="none"/></svg>
<div class="t" id="t94" style="left:287.90px;top:756.02px;font-size:12.5px;color:#1f2125;font-weight:400;transform:scaleX(0.9774);transform-origin:0 0;">Overall</div>
<svg style="left:291px;top:778px" width="11" height="11" viewBox="0 0 11 11"><path d="M0 1H9M0 4H6M0 7H11M0 10H4" stroke="#8a8e94" stroke-width="1.4"/></svg>
<div class="t" id="t95" style="left:312.30px;top:777.62px;font-size:12.5px;color:#3a3d42;font-weight:400;transform:scaleX(0.9865);transform-origin:0 0;">group by</div>
<div class="t" id="t96" style="left:369.20px;top:778.89px;font-size:11px;color:#1f2125;font-weight:400;-webkit-text-stroke:0.35px #1f2125;transform:scaleX(0.9916);transform-origin:0 0;">utm_source</div>
<div class="t" id="t97" style="right:541.70px;top:764.62px;font-size:12.5px;color:#1f2125;font-weight:400;-webkit-text-stroke:0.35px #1f2125;transform:scaleX(1.0376);transform-origin:100% 0;">2,270,517</div>
<div class="t" id="t98" style="right:454.00px;top:764.62px;font-size:12.5px;color:#1f2125;font-weight:400;-webkit-text-stroke:0.35px #1f2125;transform:scaleX(1.0409);transform-origin:100% 0;">34,633</div>
<div class="t" id="t99" style="right:365.70px;top:764.62px;font-size:12.5px;color:#1f2125;font-weight:400;-webkit-text-stroke:0.35px #1f2125;transform:scaleX(0.9308);transform-origin:100% 0;">1.53%</div>
<div class="t" id="t100" style="right:277.50px;top:764.62px;font-size:12.5px;color:#1f2125;font-weight:400;-webkit-text-stroke:0.35px #1f2125;transform:scaleX(1.0357);transform-origin:100% 0;">$715,576</div>
<div class="t" id="t101" style="right:189.30px;top:764.62px;font-size:12.5px;color:#1f2125;font-weight:400;-webkit-text-stroke:0.35px #1f2125;transform:scaleX(1.0462);transform-origin:100% 0;">$20.66</div>
<div class="t" id="t102" style="right:101.00px;top:764.62px;font-size:12.5px;color:#1f2125;font-weight:400;-webkit-text-stroke:0.35px #1f2125;transform:scaleX(1.0067);transform-origin:100% 0;">$266</div>
<div class="t" id="t103" style="left:1067.90px;top:764.62px;font-size:12.5px;color:#1f2125;font-weight:400;-webkit-text-stroke:0.35px #1f2125;">59,</div>
<div class="abs" style="left:1111px;top:61px;width:1px;height:492px;background:#fafafb"></div>
<div class="abs" style="left:1112px;top:61px;width:4px;height:492px;background:#c1c3c6"></div>
<svg style="left:0;top:0" width="1132" height="826" viewBox="0 0 1132 826"><path d="M974.2 33H979.8M977 30.2V35.8" stroke="#1f2125" stroke-width="1.6"/><circle cx="984.3" cy="30.9" r="2.6" stroke="#1f2125" stroke-width="1.5" fill="none"/><path d="M978.8 39.4C979 36.9 981.2 35.6 984.3 35.6S989.6 36.9 989.8 39.4Z" stroke="#1f2125" stroke-width="1.5" fill="none" stroke-linejoin="round"/><path d="M1017.2 27.3L1018 28.4C1020 28.9 1021 30.6 1021 32.6V36.6L1022.5 38.2H1011.9L1013.4 36.6V32.6C1013.4 30.6 1014.4 28.9 1016.4 28.4Z" stroke="#1f2125" stroke-width="1.5" fill="none" stroke-linejoin="round"/><path d="M1016.1 40.5H1018.2" stroke="#1f2125" stroke-width="1.5"/><circle cx="1022.3" cy="38.4" r="3.3" fill="#e0060f"/><circle cx="1052.6" cy="33.5" r="6.9" stroke="#1f2125" stroke-width="1.5" fill="none"/><path d="M1050.6 31.6A2.1 2.1 0 1 1 1053.5 33.6C1052.9 33.9 1052.6 34.3 1052.6 35" stroke="#1f2125" stroke-width="1.5" fill="none"/><circle cx="1052.6" cy="37.1" r="0.95" fill="#1f2125"/><path d="M38.5 88.4L45.2 82.7L51.9 88.4M40.6 87V94.2H43.6V89.4H46.7V94.2H49.7V87" stroke="#222428" stroke-width="1.6" fill="none" stroke-linejoin="round"/><path d="M45.2 117.6L48.4 122.4H42Z" stroke="#222428" stroke-width="1.5" fill="none" stroke-linejoin="round"/><rect x="39.1" y="125.6" width="4.6" height="4.8" stroke="#222428" stroke-width="1.5" fill="none"/><circle cx="49.1" cy="128" r="2.55" stroke="#222428" stroke-width="1.5" fill="none"/><path d="M44.3 152.9V154.6M39.5 154.2L40.8 155.5M49 154.2L47.7 155.5M37.9 158.4H39.8M39.5 162.7L40.8 161.4" stroke="#222428" stroke-width="1.5" stroke-linecap="round"/><path d="M43.3 157L50 159.4L47.4 160.5L50.9 164L49.7 165.2L46.2 161.7L45.1 164.3Z" fill="#222428" stroke="#222428" stroke-width="0.6" stroke-linejoin="round"/><path d="M47.4 191.8Q47.9 196 52.3 196.5Q47.9 197 47.4 201.2Q46.9 197 42.5 196.5Q46.9 196 47.4 191.8Z" fill="#222428" stroke="#222428" stroke-width="0.5" stroke-linejoin="round"/><path d="M40.5 190.3Q40.75 192.45 42.9 192.7Q40.75 192.95 40.5 195.1Q40.25 192.95 38.1 192.7Q40.25 192.45 40.5 190.3Z" fill="#222428" stroke="#222428" stroke-width="0.4"/><path d="M44.3 187.6Q44.5 189.2 46.1 189.4Q44.5 189.6 44.3 191.2Q44.1 189.6 42.5 189.4Q44.1 189.2 44.3 187.6Z" fill="#222428" stroke="#222428" stroke-width="0.3"/><rect x="38.9" y="231.8" width="12.2" height="11.4" rx="1.3" stroke="#222428" stroke-width="1.5" fill="none"/><path d="M42.2 236.6V240.4M45.1 234.8V240.4M48.1 238.6V240.4" stroke="#222428" stroke-width="1.5" stroke-linecap="round"/><rect x="38.8" y="266.9" width="12.6" height="9.2" rx="1.3" stroke="#222428" stroke-width="1.5" fill="none"/><path d="M45.1 276.2V278.4M42.3 278.6H47.8" stroke="#222428" stroke-width="1.6"/><circle cx="43" cy="481.5" r="2.5" stroke="#222428" stroke-width="1.5" fill="none"/><path d="M37.6 489.6C37.8 487.2 40 486 43 486S48.2 487.2 48.4 489.6Z" stroke="#222428" stroke-width="1.5" fill="none" stroke-linejoin="round"/><path d="M46.8 479.1A2.5 2.5 0 0 1 46.8 484" stroke="#222428" stroke-width="1.7" fill="none"/><path d="M49.8 486.3C51.6 487 52.6 488.2 52.8 489.8" stroke="#222428" stroke-width="1.9" fill="none"/><circle cx="44.9" cy="519.5" r="6.5" stroke="#222428" stroke-width="1.5" fill="none" stroke-dasharray="3.6 1.5" transform="rotate(-80 44.9 519.5)"/><path d="M43.3 517L47.9 519.5L43.3 522Z" fill="#222428" stroke="#222428" stroke-width="0.6" stroke-linejoin="round"/><path d="M43.8 547.9C42 549.6 39.2 552.5 39.2 555.8C39.2 559.1 41.7 561.2 44.9 561.2C48.1 561.2 50.6 559.1 50.6 555.8C50.6 553.9 49.9 552.4 48.7 551.3C48 552.4 46.6 552.6 45.7 551.8C44.8 551 44.2 549.7 43.8 547.9Z" stroke="#222428" stroke-width="1.5" fill="none" stroke-linejoin="round"/><path d="M42.4 560.6C42.7 558.7 43.7 557.3 44.8 556.5C45.9 557.3 46.9 558.7 47.2 560.6" stroke="#222428" stroke-width="1.5" fill="none"/><path d="M42.1 584.6H48.5M43.8 584.6V589.8L39.1 595.4H51.4L46.8 589.8V584.6" stroke="#222428" stroke-width="1.5" fill="none" stroke-linejoin="round"/><circle cx="45" cy="625.3" r="6.5" stroke="#222428" stroke-width="1.5" fill="none"/><path d="M48.2 622.2L46.6 626.6L41.9 628.5L43.5 624.1Z" fill="#222428" stroke="#222428" stroke-width="0.5" stroke-linejoin="round"/><circle cx="45.05" cy="625.35" r="0.9" fill="#f3f4f6"/><ellipse cx="45.1" cy="665.1" rx="6" ry="2.3" stroke="#222428" stroke-width="1.5" fill="none"/><path d="M39.1 665.1V672.4C39.1 673.8 41.8 674.8 45.1 674.8S51.1 673.8 51.1 672.4V665.1M39.1 668.8C39.1 670.1 41.8 671.1 45.1 671.1S51.1 670.1 51.1 668.8" stroke="#222428" stroke-width="1.5" fill="none"/><path d="M38.4 703.8H40.4L42.6 710.2L45.5 697.4L48.1 706.6L49.8 701.6L51.5 704" stroke="#222428" stroke-width="1.6" fill="none" stroke-linejoin="round" stroke-linecap="round"/><rect x="39.3" y="733.3" width="12.2" height="11.8" stroke="#222428" stroke-width="1.5" fill="none" stroke-dasharray="1.4 1.6"/><rect x="42.3" y="736.1" width="6" height="6.1" stroke="#222428" stroke-width="1.6" fill="none"/><path d="M41.5 769.8H47.3A2.35 2.35 0 0 1 47.3 774.5H43.1A1.95 1.95 0 0 0 43.1 778.4H50.2" stroke="#222428" stroke-width="1.5" fill="none"/><path d="M42.6 767.7L40.2 769.8L42.6 771.9Z" fill="#222428" stroke="#222428" stroke-width="0.8" stroke-linejoin="round"/><path d="M48.5 776.3L50.7 778.4L48.5 780.5" stroke="#222428" stroke-width="1.5" fill="none"/><path d="M1001 84.3H1008.6M1011.8 84.3H1014.1M1010.4 81.6V86.8M1001 88.8H1003.2M1006.2 88.8H1014.1M1004.6 86.4V91.2M1001 93.2H1006M1009 93.2H1014.1M1007.5 90.8V95.8" stroke="#fff" stroke-width="1.5"/><path d="M258.4 187.8H269L264.7 192.9V198.4H262.7V192.9Z" stroke="#1f2125" stroke-width="1.4" fill="none" stroke-linejoin="round"/><circle cx="359.6" cy="191.2" r="2.1" stroke="#1f2125" stroke-width="1.4" fill="none"/><path d="M354.6 197.6C354.8 195.4 356.9 194.5 359.8 194.5S364.8 195.4 365 197.6Z" stroke="#1f2125" stroke-width="1.4" fill="none" stroke-linejoin="round"/><path d="M364.4 189A2.1 2.1 0 0 1 364.4 193.3" stroke="#1f2125" stroke-width="1.7" fill="none"/><path d="M366 194.8C367.2 195.4 368 196.3 368.3 197.8" stroke="#1f2125" stroke-width="1.6" fill="none"/><path d="M584 189A4.2 4.2 0 0 1 587.9 194.3M580.4 191.4A4.2 4.2 0 0 0 584.4 197.2" stroke="#1f2125" stroke-width="1.5" fill="none"/><path d="M584.6 187.1L582.3 189L584.6 190.9Z M583.7 195.3L586 197.2L583.7 199.1Z" fill="#1f2125" stroke="#1f2125" stroke-width="0.6" stroke-linejoin="round"/></svg>
</div></div>
</body></html>
